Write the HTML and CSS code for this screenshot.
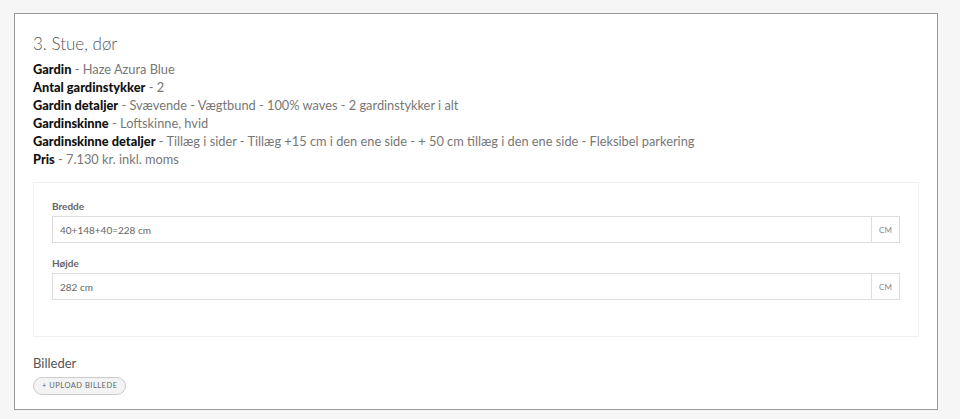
FILE: index.html
```html
<!DOCTYPE html>
<html lang="da">
<head>
    <meta charset="UTF-8">
    <meta name="viewport" content="width=device-width, initial-scale=1.0">
    <title>3. Stue, dør</title>
	<link rel="stylesheet" href="styles.css">
</head>
<body>
    <div class="card">
		<h2 class="room-title">3. Stue, dør</h2>
		<ul class="specs">
			<li><b>Gardin</b> - Haze Azura Blue</li>
			<li><b>Antal gardinstykker</b> - 2</li>
			<li><b>Gardin detaljer</b> - Svævende - Vægtbund - 100% waves - 2 gardinstykker i alt</li>
			<li><b>Gardinskinne</b> - Loftskinne, hvid</li>
			<li><b>Gardinskinne detaljer</b> - Tillæg i sider - Tillæg +15 cm i den ene side - + 50 cm tillæg i den ene side - Fleksibel parkering</li>
			<li><b>Pris</b> - 7.130 kr. inkl. moms</li>
		</ul>
		<div class="measures">
			<div class="field">
				<label class="field-label">Bredde</label>
				<div class="input-group">
					<input class="input" type="text" value="40+148+40=228 cm">
					<span class="addon">CM</span>
				</div>
			</div>
			<div class="field">
				<label class="field-label">Højde</label>
				<div class="input-group">
					<input class="input" type="text" value="282 cm">
					<span class="addon">CM</span>
				</div>
			</div>
		</div>
		<div class="images">
			<div class="images-title">Billeder</div>
			<button class="upload">+ Upload billede</button>
		</div>
	</div>
</body>
</html>
```

FILE: styles.css
```css
/* styles.css */
body {
    font-family: Lato, "Liberation Sans", sans-serif;
    margin: 0;
    padding: 13px 22px 0 14px;
    background: #f6f6f6;
    color: #777;
}
.card {
    background: #fff;
    border: 1px solid #9a9a9a;
    padding: 19px 18px 17px 18px;
    height: 359px;
}
.room-title {
    margin: 0 0 5px 0;
    font-size: 17px;
    font-weight: 300;
    color: #555;
    line-height: 22px;
}
.specs {
    list-style: none;
    margin: 0;
    padding: 0;
    font-size: 12.8px;
    line-height: 18px;
}
.specs b {
    color: #111;
    font-weight: 900;
}
.measures {
    margin-top: 14px;
    border: 1px solid #efefef;
    padding: 17px 18px 36px 18px;
}
.field + .field {
    margin-top: 14px;
}
.field-label {
    display: block;
    font-size: 10px;
    font-weight: 700;
    color: #666;
    margin-bottom: 4px;
}
.input-group {
    display: flex;
    height: 27px;
}
.input {
    flex: 1;
    border: 1px solid #ddd;
    padding: 0 7px;
    font-family: inherit;
    font-size: 10px;
    color: #666;
    outline: none;
}
.addon {
    width: 27px;
    border: 1px solid #ddd;
    border-left: none;
    display: flex;
    align-items: center;
    justify-content: center;
    font-size: 8px;
    color: #888;
}
.images {
    margin-top: 18px;
}
.images-title {
    font-size: 13px;
    color: #555;
    margin-bottom: 1px;
}
.upload {
    font-family: inherit;
    font-size: 7.5px;
    text-transform: uppercase;
    letter-spacing: 0.5px;
    color: #666;
    background: #f3f3f3;
    border: 1px solid #ccc;
    border-radius: 9px;
    padding: 3px 8px 4px 8px;
}
```
